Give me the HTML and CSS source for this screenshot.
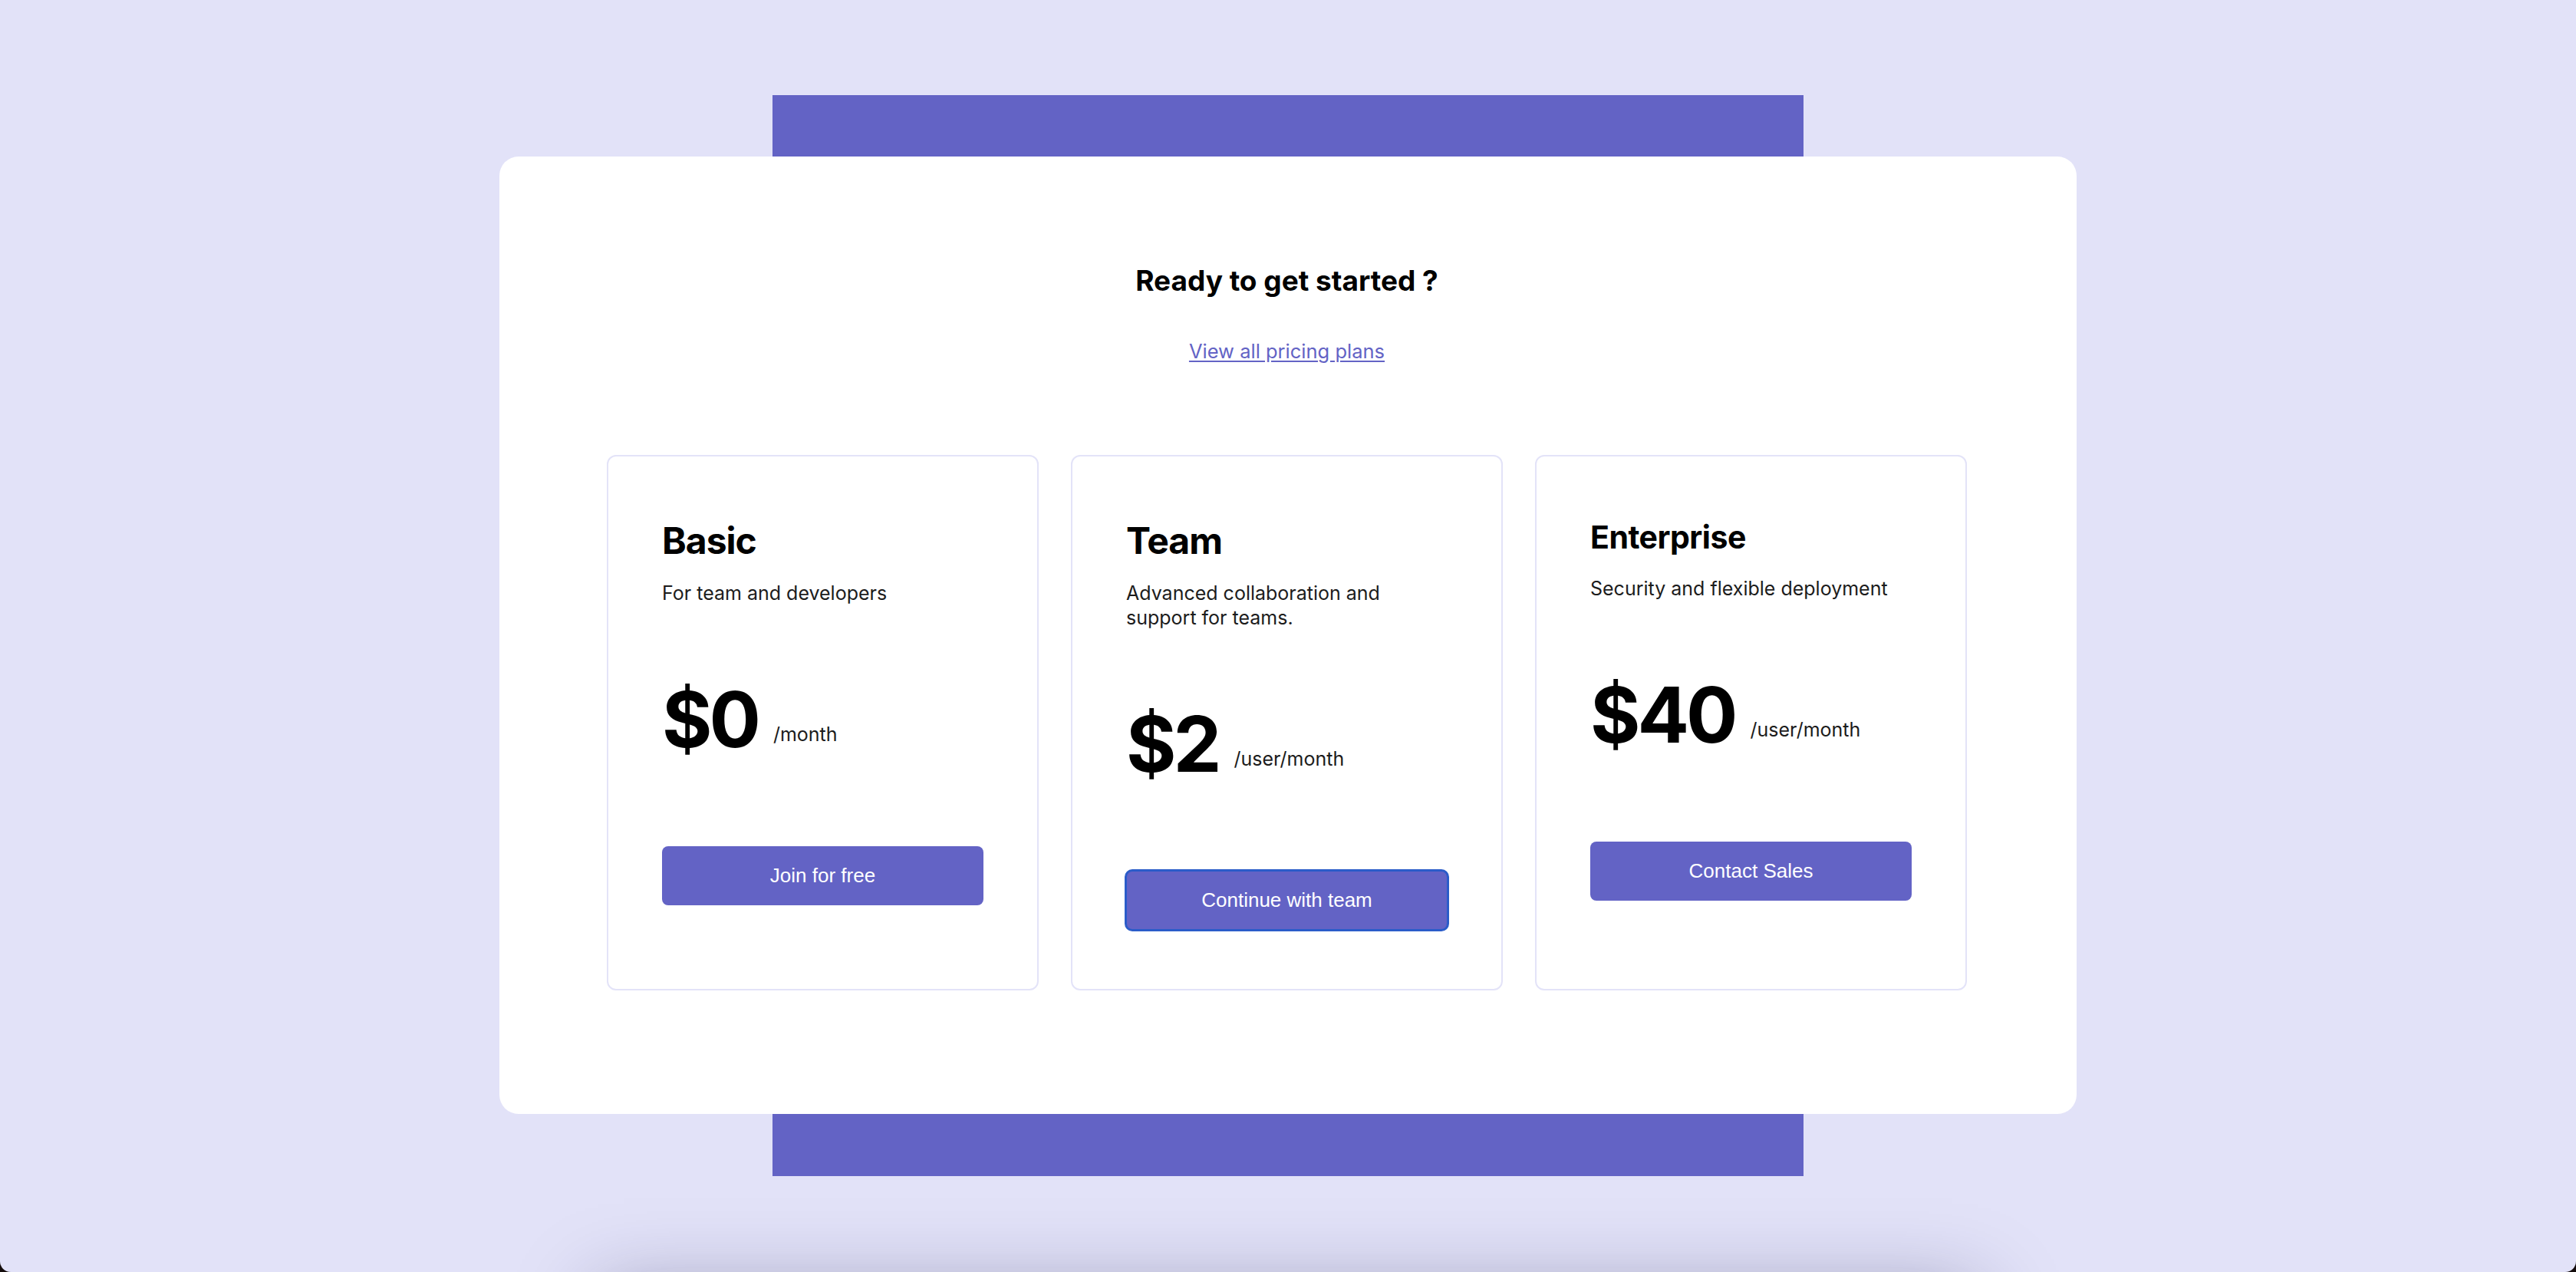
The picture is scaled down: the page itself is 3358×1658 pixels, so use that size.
FILE: index.html
```html
<!DOCTYPE html>
<html lang="en">
<head>
<meta charset="utf-8">
<title>Pricing</title>
<link rel="stylesheet" href="styles.css">
</head>
<body>
<div class="page">
  <section class="band">
    <div class="panel">
      <h1 class="panel-title">Ready to get started ?</h1>
      <a class="panel-link" href="#">View all pricing plans</a>
      <div class="plans">
        <div class="plan">
          <h2 class="plan-name">Basic</h2>
          <p class="plan-desc">For team and developers</p>
          <div class="plan-price"><span class="amount">$0</span><span class="unit">/month</span></div>
          <button class="plan-btn">Join for free</button>
        </div>
        <div class="plan">
          <h2 class="plan-name">Team</h2>
          <p class="plan-desc">Advanced collaboration and support for teams.</p>
          <div class="plan-price"><span class="amount">$2</span><span class="unit">/user/month</span></div>
          <button class="plan-btn plan-btn-focus">Continue with team</button>
        </div>
        <div class="plan">
          <h3 class="plan-name plan-name-small">Enterprise</h3>
          <p class="plan-desc">Security and flexible deployment</p>
          <div class="plan-price"><span class="amount">$40</span><span class="unit">/user/month</span></div>
          <button class="plan-btn">Contact Sales</button>
        </div>
      </div>
    </div>
  </section>
  <div class="next"></div>
</div>
</body>
</html>
```

FILE: styles.css
```css
html {
  background: #140c0c;
}
body {
  margin: 0;
}
.page {
  height: 1658px;
  overflow: hidden;
  box-sizing: border-box;
  padding-top: 124px;
  background: #e2e2f8;
  border-radius: 0 0 14px 14px;
  font-family: Inter, "Noto Sans", sans-serif;
  color: #000;
}
.band {
  width: 1344px;
  margin: 0 auto;
  background: #6363c5;
  padding: 80px 0 81px;
}
.panel {
  margin: 0 -356px;
  background: #fff;
  border-radius: 25px;
  padding: 139px 143px 161px 140px;
}
.panel-title {
  margin: 0;
  text-align: center;
  font-size: 37px;
  line-height: 46px;
  font-weight: 700;
}
.panel-link {
  display: block;
  width: fit-content;
  margin: 53px auto 0;
  font-size: 25.5px;
  line-height: 32px;
  color: #6363c5;
  text-decoration: underline;
  text-underline-offset: 3px;
}
.plans {
  display: grid;
  grid-template-columns: repeat(3, 1fr);
  gap: 42px;
  margin-top: 119px;
}
.plan {
  border: 2px solid #e3e3f8;
  border-radius: 12px;
  padding: 81px 70px 77px;
}
.plan-name {
  margin: 0 0 23px;
  font-size: 48px;
  line-height: 58px;
  font-weight: 700;
  letter-spacing: -1px;
}
.plan-name-small {
  font-size: 41px;
  line-height: 48px;
  margin-bottom: 27px;
  letter-spacing: -0.5px;
}
.plan-desc {
  margin: 0;
  font-size: 25px;
  line-height: 32px;
  color: #1c1c1c;
}
.plan-price {
  display: flex;
  align-items: flex-end;
  margin-top: 89px;
}
.amount {
  font-size: 100px;
  line-height: 120px;
  font-weight: 700;
  letter-spacing: -4px;
}
.unit {
  font-size: 25px;
  line-height: 30px;
  padding-bottom: 26px;
  margin-left: 20px;
  color: #1c1c1c;
}
.plan-btn {
  display: block;
  width: 100%;
  height: 77px;
  margin-top: 105px;
  border: 0;
  border-radius: 8px;
  background: #6363c5;
  color: #fff;
  font-family: "Liberation Sans", Arial, sans-serif;
  font-size: 26px;
}
.plan-btn-focus {
  outline: 3px solid #2b5cc9;
  outline-offset: -1px;
}
.next {
  width: 1800px;
  height: 400px;
  margin: 150px auto 0;
  background: #e2e2f8;
  box-shadow: 0 0 100px rgba(20, 20, 70, 0.35);
}
```
